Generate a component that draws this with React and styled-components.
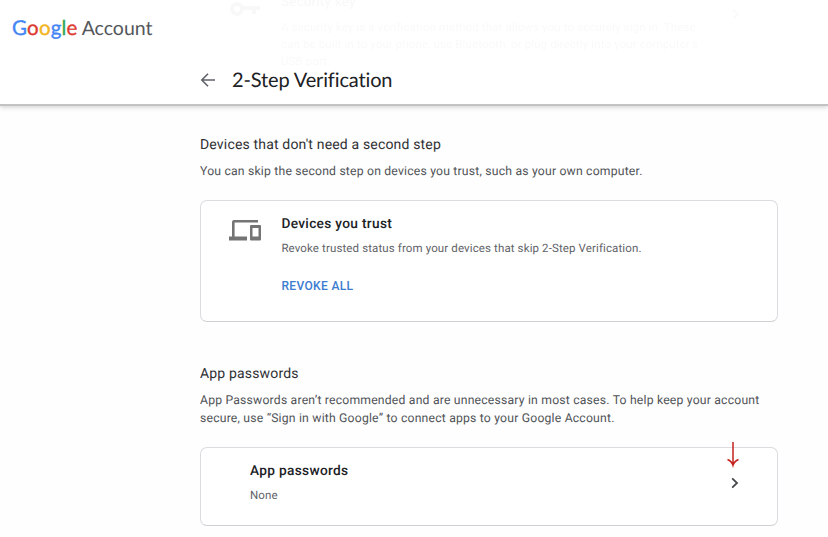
import React from "react";
import styled, { createGlobalStyle } from "styled-components";

const GlobalStyle = createGlobalStyle`
  * { box-sizing: border-box; }
  html, body { margin: 0; padding: 0; background: #fefefe; }
  body {
    font-family: Roboto, Arial, sans-serif;
    color: #202124;
    overflow: hidden;
    text-rendering: geometricPrecision;
  }
  h1, h2, h3, p { margin: 0; font-weight: 400; }
`;

const Page = styled.div`
  width: 828px;
  height: 537px;
  overflow: hidden;
  background: #fefefe;
`;

const Header = styled.header`
  position: relative;
  height: 106px;
  background: #fff;
  border-bottom: 2px solid #c3c3c3;
  box-shadow: 0 1px 5px rgba(0, 0, 0, 0.2);
`;

const Brand = styled.div`
  padding: 15px 0 0 12px;
  height: 63px;
  font: 400 20px/26px Lato, sans-serif;
  white-space: nowrap;
`;

const Logo = styled.span`
  font-size: 20.5px;
  letter-spacing: 0.2px;
  -webkit-text-stroke: 0.35px currentColor;
`;

const Letter = styled.span`
  color: ${(p) => p.$color};
`;

const Product = styled.span`
  margin-left: 4px;
  color: #54575b;
  font-size: 19.5px;
`;

const TitleBar = styled.div`
  display: flex;
  align-items: center;
  height: 34px;
  padding-left: 200px;
`;

const Title = styled.h1`
  margin: -1px 0 0 16px;
  font: 400 20px/28px Lato, sans-serif;
  font-variant-ligatures: none;
  letter-spacing: -0.14px;
  color: #202124;
  white-space: nowrap;
`;

const Ghost = styled.div`
  position: absolute;
  top: -8px;
  left: 229px;
  display: flex;
  width: 530px;
  opacity: 0.025;
  color: #202124;
  filter: blur(0.5px);
  pointer-events: none;
`;

const GhostText = styled.div`
  width: 435px;
  margin-left: 20px;
  font-size: 11.5px;
  line-height: 17px;
  letter-spacing: 0.12px;
  white-space: nowrap;
`;

const GhostTitle = styled.div`
  margin-bottom: 7px;
  font-size: 13.5px;
  font-weight: 500;
  line-height: 20px;
`;

const GhostChevron = styled.svg`
  margin: 15px 0 0 14px;
`;

const Main = styled.main`
  width: 778px;
  padding: 29px 0 0 200px;
`;

const SectionTitle = styled.h2`
  font-size: 14px;
  line-height: 20px;
  letter-spacing: 0.17px;
  color: #303134;
`;

const SectionText = styled.p`
  margin-top: 7px;
  font-size: 12.2px;
  line-height: 18px;
  letter-spacing: 0.2px;
  color: #505357;
  white-space: nowrap;
`;

const Card = styled.section`
  display: flex;
  height: ${(p) => p.$height}px;
  margin-top: 20px;
  padding: ${(p) => p.$padding};
  border: 1px solid #dadce0;
  border-bottom-color: #cfd0d3;
  border-radius: 7px;
  background: #fff;
`;

const CardBody = styled.div`
  flex: 1;
  margin-left: ${(p) => p.$indent || 0}px;
`;

const CardTitle = styled.h3`
  font-size: 13.7px;
  font-weight: 500;
  line-height: 20px;
  letter-spacing: 0.32px;
  color: #202124;
`;

const CardText = styled.p`
  margin-top: 6px;
  font-size: 11.5px;
  line-height: 16px;
  letter-spacing: 0.12px;
  color: #5f6368;
`;

const LinkButton = styled.button`
  display: block;
  margin-top: 22px;
  padding: 0;
  border: 0;
  background: none;
  font: 500 12px/16px Roboto, sans-serif;
  letter-spacing: 0.35px;
  color: #3b7cd0;
`;

const Spacer = styled.div`
  height: 42px;
`;

const RowIndicator = styled.div`
  position: relative;
  width: 12px;
  margin-right: 36px;
  padding-top: 15px;
`;

const Pointer = styled.svg`
  position: absolute;
  top: -20px;
  left: -3.5px;
`;

const Chevron = () => (
  <svg width="12" height="14" viewBox="0 0 12 14" fill="none" stroke="#46494c" strokeWidth="1.8" display="block">
    <path d="M3.2 2.4 8 7 3.2 11.6" />
  </svg>
);

export default function App() {
  return (
    <Page>
      <GlobalStyle />
      <Header>
        <Ghost>
          <svg width="32" height="26" viewBox="0 0 32 26" fill="none" stroke="#202124" strokeWidth="4">
            <circle cx="8" cy="17" r="5" />
            <path d="M13 16h18M25 16v6" />
          </svg>
          <GhostText>
            <GhostTitle>Security key</GhostTitle>
            A security key is a verification method that allows you to securely sign in. These
            <br />
            can be built in to your phone, use Bluetooth, or plug directly into your computer's
            <br />
            USB port.
          </GhostText>
          <GhostChevron width="12" height="14" viewBox="0 0 12 14" fill="none" stroke="#46494c" strokeWidth="2">
            <path d="M3.2 2.4 8 7 3.2 11.6" />
          </GhostChevron>
        </Ghost>
        <Brand>
          <Logo>
            <Letter $color="#4285f4">G</Letter>
            <Letter $color="#dc3b32">o</Letter>
            <Letter $color="#f2b51d">o</Letter>
            <Letter $color="#4285f4">g</Letter>
            <Letter $color="#34a853">l</Letter>
            <Letter $color="#dc3b32">e</Letter>
          </Logo>
          <Product>Account</Product>
        </Brand>
        <TitleBar>
          <svg width="16" height="16" viewBox="0 0 16 16" fill="none" stroke="#5f6368" strokeWidth="1.6">
            <path d="M15 8H2M8 1.7 1.8 8 8 14.3" />
          </svg>
          <Title>2-Step Verification</Title>
        </TitleBar>
      </Header>
      <Main>
        <SectionTitle>Devices that don't need a second step</SectionTitle>
        <SectionText>You can skip the second step on devices you trust, such as your own computer.</SectionText>
        <Card $height={122} $padding="13px 0 0 28px">
          <svg width="32" height="32" viewBox="0 0 32 32" fill="#747474">
            <path d="M5 6H29V8.6H5.6V22.6H18V26.6H0V22.6H3V8Q3 6 5 6Z" />
            <path fillRule="evenodd" d="M22 11H31Q32 11 32 12V25.6Q32 26.6 31 26.6H22Q21 26.6 21 25.6V12Q21 11 22 11ZM23.5 14V22.6H29.5V14Z" />
          </svg>
          <CardBody $indent={20.4}>
            <CardTitle>Devices you trust</CardTitle>
            <CardText>Revoke trusted status from your devices that skip 2-Step Verification.</CardText>
            <LinkButton>REVOKE ALL</LinkButton>
          </CardBody>
        </Card>
        <Spacer />
        <SectionTitle>App passwords</SectionTitle>
        <SectionText>
          App Passwords aren’t recommended and are unnecessary in most cases. To help keep your account
          <br />
          secure, use “Sign in with Google” to connect apps to your Google Account.
        </SectionText>
        <Card $height={79} $padding="13px 0 0 49px">
          <CardBody>
            <CardTitle>App passwords</CardTitle>
            <CardText>None</CardText>
          </CardBody>
          <RowIndicator>
            <Pointer width="14" height="27" viewBox="0 0 14 27" fill="none" stroke="#c5221f" strokeWidth="1.5">
              <path d="M7 1V24M1.5 18.5Q5.8 20.2 7 24.4Q8.2 20.2 12.5 18.5" />
            </Pointer>
            <Chevron />
          </RowIndicator>
        </Card>
      </Main>
    </Page>
  );
}
